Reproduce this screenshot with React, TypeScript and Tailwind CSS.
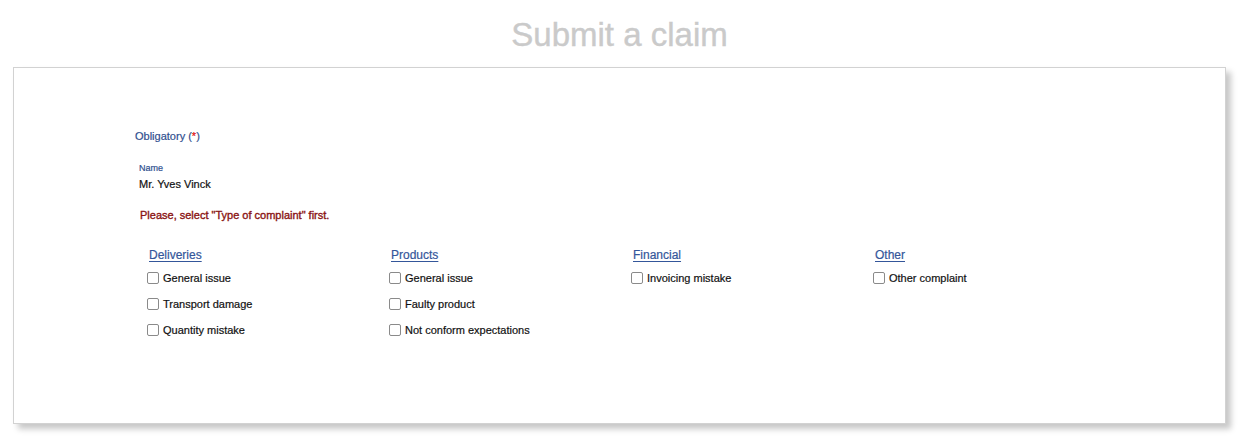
import React from "react";

const columns = [
  { title: "Deliveries", items: ["General issue", "Transport damage", "Quantity mistake"] },
  { title: "Products", items: ["General issue", "Faulty product", "Not conform expectations"] },
  { title: "Financial", items: ["Invoicing mistake"] },
  { title: "Other", items: ["Other complaint"] },
];

export default function App() {
  return (
    <div className="w-[1249px] h-[447px] bg-white" style={{ fontFamily: '"Liberation Sans", Arial, sans-serif' }}>
      <div className="ml-[13px] w-[1213px]">
        <h1 className="h-[67px] pt-[13px] text-center text-[33px] leading-[44px] text-[#cacaca] [-webkit-text-stroke:0.4px_#cacaca]">Submit a claim</h1>
        <div className="h-[357px] border border-[#d2d2d2] bg-white shadow-[5px_5px_6px_rgba(0,0,0,0.22)] pl-[121px] pt-[61px] [-webkit-text-stroke:0.2px_currentColor]">
          <div className="text-[11px] leading-[14px] text-[#2f4f8f]">
            Obligatory (<span className="text-[#e01010]">*</span>)
          </div>
          <div className="pl-[4px] pt-[20px]">
            <div className="text-[9px] leading-[11px] text-[#2f4f8f]">Name</div>
            <div className="mt-[3px] text-[11px] leading-[14px] text-[#111]">Mr. Yves Vinck</div>
          </div>
          <div className="mt-[17px] pl-[5px] text-[11px] leading-[14px] text-[#8a1414] [-webkit-text-stroke:0.35px_#8a1414]">
            Please, select "Type of complaint" first.
          </div>
          <div className="mt-[25px] pl-[12px] flex">
            {columns.map((col) => (
              <div key={col.title} className="w-[242px]">
                <div className="pl-[2px] text-[12px] leading-[16px] text-[#34569a] underline underline-offset-[2px]">
                  {col.title}
                </div>
                <div className="mt-[8px] flex flex-col gap-[12px]">
                  {col.items.map((it) => (
                    <label key={it} className="flex items-center h-[14px] text-[11px] leading-[14px] text-[#111]">
                      <span className="inline-block w-[12px] h-[12px] border border-[#8a8a8a] rounded-[2px] bg-white mr-[4px] [-webkit-text-stroke:0]" />
                      {it}
                    </label>
                  ))}
                </div>
              </div>
            ))}
          </div>
        </div>
      </div>
    </div>
  );
}
